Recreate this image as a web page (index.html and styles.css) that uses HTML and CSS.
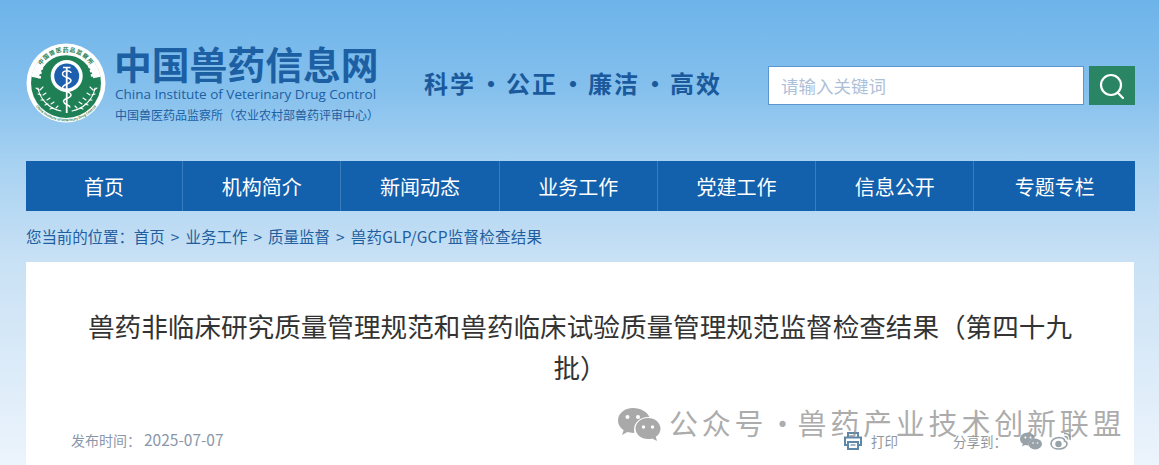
FILE: index.html
```html
<!DOCTYPE html>
<html lang="zh-CN">
<head>
  <meta charset="UTF-8">
  <title>兽药GLP/GCP监督检查结果</title>
  <link rel="stylesheet" href="styles.css">
</head>
<body>
  <div class="wrap">
    <!-- header -->
    <header class="header">
      <svg class="logo" viewBox="0 0 80 80" width="80" height="80">
        <defs>
          <path id="ring-top" d="M11 37.500A29 29 0 0 1 69 37.500"/>
          <path id="ring-bottom" d="M1.700 40a38.300 38.300 0 0 0 76.600 0"/>
          <g id="laurel" fill="none" stroke="#fff" stroke-width="1.100" stroke-linecap="round">
            <path d="M35 68C24 66 14 57 12 45"/>
            <path d="M13 47l-3-2M15 52l-3-1M18 57l-3 0M22 61l-3 1M27 65l-3 1M14 47l3-3M17 52l3-2M21 57l3-2M25 61l3-2M30 65l2-2"/>
          </g>
        </defs>
        <circle cx="40" cy="40" r="39.500" fill="#fff"/>
        <circle cx="40" cy="40" r="35" fill="#1f8055"/>
        <!-- white band with the name, gear teeth under it -->
        <path d="M9 34.500A31.500 31.500 0 0 1 71 34.500" fill="none" stroke="#fff" stroke-width="7.500"/>
        <path d="M13.500 35.500A26.500 26.500 0 0 1 66.500 35.500" fill="none" stroke="#fff" stroke-width="3" stroke-dasharray="2.600 2"/>
        <text class="logo-ring" font-size="5.800" fill="#1f8055" letter-spacing=".8"><textPath href="#ring-top" startOffset="50%" text-anchor="middle">中国兽医药品监察所</textPath></text>
        <text class="logo-ring" font-size="3.400" fill="#1f8055"><textPath href="#ring-bottom" startOffset="50%" text-anchor="middle">China Institute of Veterinary Drug Control</textPath></text>
        <use href="#laurel"/>
        <use href="#laurel" transform="matrix(-1 0 0 1 81 0)"/>
        <circle cx="40.700" cy="33" r="16" fill="#fff"/>
        <circle cx="40.700" cy="33" r="12.500" fill="#1b5fae"/>
        <path d="M40.700 24v46" stroke="#fff" stroke-width="1.800"/>
        <path d="M37 24.500h7.500M45 30c0-3-8.500-3-8.500 1s8.500 3 8.500 6.500-8.500 3.500-8.500 7.500 8.500 3 8.500 7-8 3-7.500 6.500 6.500 3 6.500 6" fill="none" stroke="#fff" stroke-width="1.500"/>
      </svg>
      <div class="brand">
        <div class="brand-name">中国兽药信息网</div>
        <div class="brand-en">China Institute of Veterinary Drug Control</div>
        <div class="brand-sub">中国兽医药品监察所（农业农村部兽药评审中心）</div>
      </div>
      <div class="slogan">
        <span>科学</span><i>·</i><span>公正</span><i>·</i><span>廉洁</span><i>·</i><span>高效</span>
      </div>
      <form class="search">
        <input type="text" placeholder="请输入关键词">
        <button type="button" aria-label="搜索">
          <svg viewBox="0 0 28 28" width="28" height="28" fill="none" stroke="#fff" stroke-width="2.200" stroke-linecap="round">
            <circle cx="13" cy="13" r="10"/>
            <path d="M20 21l5 5"/>
          </svg>
        </button>
      </form>
    </header>

    <nav class="nav">
      <a href="#">首页</a>
      <a href="#">机构简介</a>
      <a href="#">新闻动态</a>
      <a href="#">业务工作</a>
      <a href="#">党建工作</a>
      <a href="#">信息公开</a>
      <a href="#">专题专栏</a>
    </nav>

    <div class="crumbs">
      <span class="crumbs-label">您当前的位置：</span><a href="#">首页</a><span class="sep">&gt;</span><a href="#">业务工作</a><span class="sep">&gt;</span><a href="#">质量监督</a><span class="sep">&gt;</span><a href="#">兽药GLP/GCP监督检查结果</a>
    </div>

    <main class="card">
      <h1 class="title">兽药非临床研究质量管理规范和兽药临床试验质量管理规范监督检查结果（第四十九批）</h1>
      <div class="meta">
        <span class="date">发布时间：<b>2025-07-07</b></span>
        <div class="tools">
          <svg class="print-icon" viewBox="0 0 20 20" width="20" height="20" fill="none" stroke="#5f87a8" stroke-width="2">
            <path d="M5 6V2h10v4"/>
            <path d="M5 14H2V6.500h16V14h-3"/>
            <path d="M5 11h10v7H5z"/>
            <path d="M7.500 14h5" stroke-width="1.200"/>
          </svg>
          <span class="print-label">打印</span>
          <span class="share-label">分享到：</span>
          <svg class="share-icon" viewBox="0 0 22 18" width="22" height="18" fill="#98a2a8">
            <path d="M8 .5C3.600.5 0 3.400 0 7c0 2 1.100 3.800 2.900 5L2 14.500l3-1.400c1 .3 2 .4 3 .4h.6C8.200 9.800 11 7 15 6.600 14.200 3.100 11.400.5 8 .5z"/>
            <ellipse cx="15.200" cy="12" rx="6.800" ry="5.400"/>
            <g fill="#fff">
              <circle cx="5.400" cy="5.400" r="1"/>
              <circle cx="10.500" cy="5.400" r="1"/>
              <circle cx="13" cy="11" r=".8"/>
              <circle cx="17.500" cy="11" r=".8"/>
            </g>
          </svg>
          <svg class="share-icon" viewBox="0 0 22 18" width="22" height="18" fill="none" stroke="#98a2a8" stroke-width="1.600">
            <path d="M9 5.500C4.500 5.500 1 8.500 1 11.700S4.500 17 9 17s8-2.200 8-5.300c0-1.500-1.500-2.300-2.500-2.600.5-2.500-2-3.300-5.500-3.600z"/>
            <circle cx="8.500" cy="12" r="2.400" fill="#98a2a8"/>
            <path d="M14 1.500c4-.5 7 2 6 6.500M14.500 4.500c2-.2 3.500 1 3 3"/>
          </svg>
        </div>
      </div>
      <div class="watermark">
        <svg viewBox="0 0 44 36" width="44" height="36" fill="#a9a9a9">
          <path d="M16 1C7.500 1 1 6.500 1 13.500c0 4 2.200 7.400 5.600 9.700L5 28l5.400-2.900c1.800.5 3.700.8 5.600.8.500 0 1 0 1.500-.1-.3-1.100-.5-2.200-.5-3.300 0-7 6.300-12.500 14-12.500h1.300C30.500 5 24 1 16 1z"/>
          <path d="M31 11c-6.900 0-12.500 4.700-12.500 10.500S24.100 32 31 32c1.500 0 2.900-.2 4.200-.6L40 34l-1.200-4.200c3-2 4.700-4.900 4.700-8.300C43.500 15.700 37.900 11 31 11z"/>
          <g fill="#fff">
            <circle cx="10.500" cy="10" r="2"/>
            <circle cx="21" cy="10" r="2"/>
            <circle cx="26.500" cy="20" r="1.700"/>
            <circle cx="35.500" cy="20" r="1.700"/>
          </g>
        </svg>
        <span>公众号</span><i>·</i><span>兽药产业技术创新联盟</span>
      </div>
    </main>
  </div>
</body>
</html>
```

FILE: styles.css
```css
html, body {
  margin: 0;
  height: 465px;
  overflow: hidden;
}
body {
  background: linear-gradient(180deg, #6db4ea 0, #85c0ed 90px, #a6d1f1 160px, #c9e1f5 262px, #ecf4fc 465px);
  font-family: "Noto Sans CJK SC", "Liberation Sans", sans-serif;
  color: #333;
}
.wrap {
  width: 1109px;
  margin-left: 26px;
}

/* header */
.header {
  display: flex;
  align-items: flex-start;
  height: 161px;
  box-sizing: border-box;
  padding-top: 43px;
}
.logo {
  flex: none;
  width: 80px;
  height: 80px;
}
.logo-ring {
  font-family: "Noto Sans CJK SC", sans-serif;
  font-weight: 700;
}
.brand {
  margin-left: 8px;
  width: 270px;
  flex: none;
  color: #1c5fa3;
}
.brand-name {
  font-size: 37.800px;
  font-weight: 700;
  line-height: 42px;
  margin-top: -1px;
  white-space: nowrap;
}
.brand-en {
  font-family: "Open Sans", "Liberation Sans", sans-serif;
  font-size: 13.500px;
  line-height: 19px;
  white-space: nowrap;
  margin-top: 1px;
  margin-left: 1px;
}
.brand-sub {
  font-size: 12px;
  line-height: 17px;
  margin-top: 2px;
  margin-left: 1px;
  white-space: nowrap;
}
.slogan {
  display: flex;
  align-items: center;
  margin-left: 40px;
  margin-top: 19px;
  width: 344px;
  flex: none;
  font-size: 24px;
  line-height: 42px;
  font-weight: 700;
  letter-spacing: 2px;
  color: #1a5a9c;
}
.slogan i {
  width: 30px;
  text-align: center;
  font-style: normal;
  letter-spacing: 0;
}
.search {
  display: flex;
  gap: 5px;
  margin: 23px 0 0 0;
}
.search input {
  width: 316px;
  height: 39px;
  box-sizing: border-box;
  padding: 0 12px;
  border: 1px solid #5d95cf;
  background: #fff;
  font-family: inherit;
  font-size: 17.500px;
  outline: none;
}
.search input::placeholder {
  color: #aebfd8;
  opacity: 1;
}
.search button {
  width: 46px;
  height: 39px;
  padding: 0;
  border: none;
  background: #2a8565;
  display: flex;
  align-items: center;
  justify-content: center;
}

/* nav */
.nav {
  display: grid;
  grid-template-columns: 156px repeat(5, 158.300px) 1fr;
  height: 50px;
  background: #1360ac;
}
.nav a {
  display: flex;
  align-items: center;
  justify-content: center;
  color: #fff;
  font-size: 20px;
  text-decoration: none;
  border-left: 1px solid #3a7dbd;
}
.nav a:first-child {
  border-left: none;
}

/* breadcrumb */
.crumbs {
  height: 51px;
  line-height: 51px;
  font-size: 15.500px;
  color: #1f5f9f;
  white-space: nowrap;
}
.crumbs a {
  color: inherit;
  text-decoration: none;
}
.crumbs a:last-child {
  letter-spacing: .25px;
}
.crumbs-label {
  letter-spacing: -.1px;
}
.sep {
  margin: 0 6px;
}

/* article */
.card {
  position: relative;
  width: 1108px;
  height: 203px;
  background: #fff;
  box-sizing: border-box;
  padding: 43px 45px 0;
}
.title {
  margin: 0;
  font-size: 26.600px;
  font-weight: 400;
  line-height: 41px;
  text-align: center;
  color: #333;
}
.meta {
  display: flex;
  justify-content: space-between;
  align-items: center;
  margin-top: 40px;
  font-size: 14px;
  color: #8a97ab;
}
.date b {
  font-weight: 400;
  font-size: 15.500px;
  margin-left: 3px;
}
.tools {
  display: flex;
  align-items: center;
  font-size: 13.500px;
  color: #8f979e;
  margin-right: 17px;
  margin-top: 4px;
}
.print-label {
  margin-left: 8px;
}
.share-label {
  margin-left: 55px;
  margin-right: 13px;
}
.share-icon + .share-icon {
  margin-left: 8px;
}

/* watermark laid over the article */
.watermark {
  position: absolute;
  left: 591px;
  top: 139px;
  display: flex;
  align-items: center;
  color: rgba(140, 140, 140, 0.72);
  font-size: 29px;
  letter-spacing: 3.800px;
  white-space: nowrap;
}
.watermark svg {
  margin-right: 8px;
}
.watermark span {
  margin-bottom: 6px;
}
.watermark i {
  width: 30px;
  margin-bottom: 6px;
  font-style: normal;
  text-align: center;
  letter-spacing: 0;
}
```
